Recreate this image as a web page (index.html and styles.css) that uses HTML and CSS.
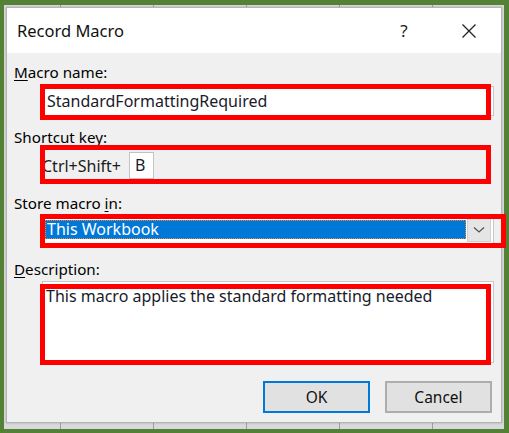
FILE: index.html
```html
<!DOCTYPE html>
<html lang="en">
<head>
<meta charset="utf-8">
<title>Record Macro</title>
<link rel="stylesheet" href="styles.css">
</head>
<body>
<div class="desk">
  <div class="dialog">
    <div class="titlebar">
      <span class="title">Record Macro</span>
      <span class="help">?</span>
      <span class="close">
        <svg width="16" height="16" viewBox="0 0 16 16"><path d="M1.5 1.5 L14.5 14.5 M14.5 1.5 L1.5 14.5" stroke="#222" stroke-width="1.3" fill="none"/></svg>
      </span>
    </div>
    <div class="body">
      <div class="label"><u>M</u>acro name:</div>
      <div class="field mark-name">
        <div class="input">StandardFormattingRequired</div>
      </div>

      <div class="label label-gap">Shortcut <u>k</u>ey:</div>
      <div class="field mark-key">
        <div class="shortcut">
          <span class="keys">Ctrl+Shift+</span>
          <span class="keybox">B</span>
        </div>
      </div>

      <div class="label label-gap2">Store macro <u>i</u>n:</div>
      <div class="field mark-store">
        <div class="combo">
          <div class="combo-value">This Workbook</div>
          <div class="combo-btn">
            <svg width="12" height="8" viewBox="0 0 12 8"><path d="M1 1.5 L6 6 L11 1.5" stroke="#555" stroke-width="1.3" fill="none"/></svg>
          </div>
        </div>
      </div>

      <div class="label label-gap3"><u>D</u>escription:</div>
      <div class="field mark-desc">
        <div class="textarea">This macro applies the standard formatting needed</div>
      </div>

      <div class="buttons">
        <div class="btn btn-ok">OK</div>
        <div class="btn">Cancel</div>
      </div>
    </div>
  </div>
</div>
</body>
</html>
```

FILE: styles.css
```css
html, body {
  margin: 0;
  padding: 0;
}

body {
  background: #538135;
  width: 509px;
  height: 433px;
  overflow: hidden;
  font-family: "Noto Sans", "DejaVu Sans", sans-serif;
  color: #111;
}

.desk {
  box-sizing: border-box;
  margin: 5px 5px 4px 4px;
  width: 500px;
  height: 424px;
  padding: 2px 2px 6px 2px;
  background-color: #d9d9d9;
  background-image: linear-gradient(to right, #9d9d9d 0, #9d9d9d 1px, transparent 1px);
  background-size: 93px 100%;
  background-position: 56px 0;
}

.dialog {
  box-sizing: border-box;
  width: 496px;
  height: 416px;
  border: 1px solid #b4b4b4;
  background: #f0f0f0;
  display: flex;
  flex-direction: column;
  box-shadow: 0 0 2px rgba(0, 0, 0, 0.25);
}

.titlebar {
  height: 45px;
  background: #ffffff;
  display: flex;
  align-items: center;
  padding-left: 10px;
  flex-shrink: 0;
}

.title {
  font-size: 16.5px;
  color: #111;
  flex: 1;
}

.help {
  font-size: 17px;
  color: #222;
  width: 16px;
  text-align: center;
  margin-right: 49px;
}

.close {
  display: flex;
  width: 16px;
  height: 16px;
  margin-right: 24px;
}

.body {
  padding: 10px 7px 0 7px;
  display: flex;
  flex-direction: column;
  font-size: 15.2px;
}

.label {
  height: 19px;
  line-height: 19px;
  color: #000;
}

.label u {
  text-decoration-thickness: 1px;
  text-underline-offset: 2px;
}

.label-gap { margin-top: 12px; }
.label-gap2 { margin-top: 10px; }
.label-gap3 { margin-top: 16px; }

.field {
  position: relative;
  margin-left: 28px;
  font-size: 16px;
}

.field::after {
  content: "";
  position: absolute;
  border: 5px solid #ff0000;
  pointer-events: none;
}

.mark-name { margin-top: 4px; }
.mark-name::after { top: -2px; left: -2px; right: 3px; bottom: -4px; }

.mark-key::after { top: -2px; left: -2px; right: 3px; bottom: 0; }

.mark-store { margin-top: 2px; }
.mark-store::after { top: -1px; left: -2px; right: -12px; bottom: -4px; }

.mark-desc { margin-top: 2px; }
.mark-desc::after { top: 3px; left: -2px; right: 3px; bottom: -2px; }

.input {
  box-sizing: border-box;
  height: 30px;
  border: 1px solid #c8c8c8;
  background: #fff;
  padding-left: 4px;
  line-height: 28px;
  color: #1a1a2a;
}

.shortcut {
  height: 37px;
  display: flex;
  align-items: center;
}

.keys {
  color: #1a1a1a;
  margin-right: 8px;
  margin-left: 0;
}

.keybox {
  box-sizing: border-box;
  width: 25px;
  height: 27px;
  border: 1px solid #c3c3c3;
  background: #fff;
  line-height: 25px;
  padding-left: 5px;
  margin-top: -1px;
  color: #1a1a2a;
}

.combo {
  box-sizing: border-box;
  height: 29px;
  border: 1px solid #c8c8c8;
  background: #fff;
  display: flex;
  align-items: center;
  padding: 0 1px 0 2px;
}

.combo-value {
  flex: 1;
  height: 19px;
  line-height: 19px;
  background: #0078d7;
  color: #fff;
  padding-left: 2px;
  outline: 1px dotted #e08a3c;
  outline-offset: -1px;
  margin-right: 1px;
}

.combo-btn {
  box-sizing: border-box;
  width: 24px;
  height: 25px;
  background: #e5e5e5;
  border: 1px solid #d0d0d0;
  display: flex;
  align-items: center;
  justify-content: center;
  margin-right: 1px;
}

.textarea {
  box-sizing: border-box;
  height: 82px;
  border: 1px solid #c8c8c8;
  background: #fff;
  padding: 5px 3px;
  line-height: 19px;
  color: #1a1a2a;
}

.buttons {
  margin-top: 18px;
  display: flex;
  justify-content: flex-end;
  gap: 15px;
  margin-right: 2px;
  font-size: 15.5px;
}

.btn {
  box-sizing: border-box;
  width: 107px;
  height: 32px;
  border: 2px solid #adadad;
  background: #e1e1e1;
  display: flex;
  align-items: center;
  justify-content: center;
  color: #111;
}

.btn-ok {
  border-color: #0078d7;
}
```
